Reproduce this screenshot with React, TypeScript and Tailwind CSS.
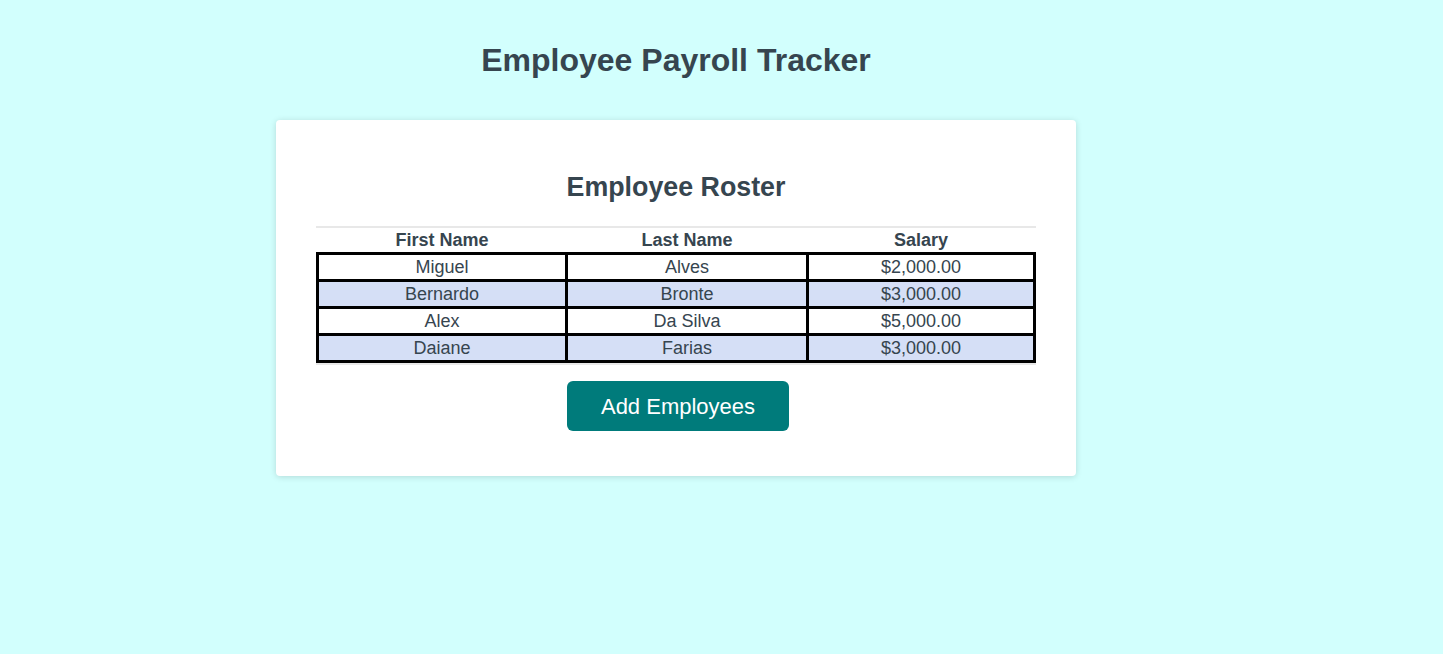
const employees = [
  { first: "Miguel", last: "Alves", salary: 2000 },
  { first: "Bernardo", last: "Bronte", salary: 3000 },
  { first: "Alex", last: "Da Silva", salary: 5000 },
  { first: "Daiane", last: "Farias", salary: 3000 },
];

const money = (n: number) =>
  n.toLocaleString("en-US", { style: "currency", currency: "USD" });

export default function App() {
  return (
    <div
      className="min-h-screen w-full bg-[#d2fffd] text-[#36454f]"
      style={{ fontFamily: '"Liberation Sans", Arial, sans-serif' }}
    >
      <div className="w-[1352px] flex flex-col items-center">
        <h1 className="mt-[42px] text-[32px] leading-[37px] font-bold">
          Employee Payroll Tracker
        </h1>

        <div className="mt-[41px] w-[800px] bg-white rounded-[4px] shadow-[0_1px_6px_rgba(0,0,0,0.15)] px-10 pt-[52px] pb-[45px] flex flex-col items-center">
          <h2 className="text-[26.8px] leading-[30px] font-bold">Employee Roster</h2>

          <div className="mt-[24px] w-full border-y-2 border-[#e8e8e8]">
            <table className="w-full border-collapse text-[18px]">
              <colgroup>
                <col className="w-[250px]" />
                <col className="w-[242px]" />
                <col className="w-[228px]" />
              </colgroup>
              <thead>
                <tr>
                  <th className="h-[23px] leading-[23px] font-bold pt-[1px]">First Name</th>
                  <th className="h-[23px] leading-[23px] font-bold pt-[1px]">Last Name</th>
                  <th className="h-[23px] leading-[23px] font-bold pt-[1px]">Salary</th>
                </tr>
              </thead>
              <tbody>
                {employees.map((e, i) => (
                  <tr key={e.first} className={i % 2 === 1 ? "bg-[#d5dff6]" : "bg-white"}>
                    <td className="border-[3px] border-black h-[24px] leading-[24px] p-0 text-center">
                      {e.first}
                    </td>
                    <td className="border-[3px] border-black h-[24px] leading-[24px] p-0 text-center">
                      {e.last}
                    </td>
                    <td className="border-[3px] border-black h-[24px] leading-[24px] p-0 text-center">
                      {money(e.salary)}
                    </td>
                  </tr>
                ))}
              </tbody>
            </table>
          </div>

          <button className="mt-4 ml-[4px] w-[222px] h-[50px] rounded-[6px] bg-[#007b7b] text-white text-[22px]">
            Add Employees
          </button>
        </div>
      </div>
    </div>
  );
}
